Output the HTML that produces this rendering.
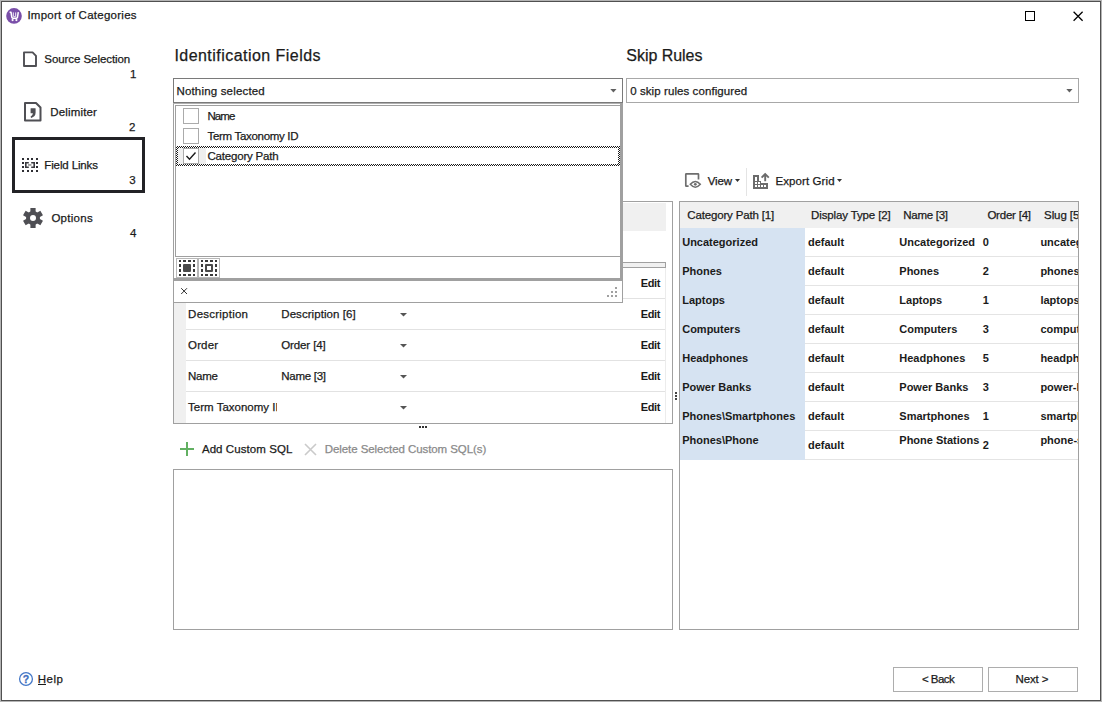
<!DOCTYPE html>
<html><head><meta charset="utf-8"><style>
html,body{margin:0;padding:0;width:1102px;height:702px;overflow:hidden;background:#fff}
body>div,body>span,body>svg{position:absolute;display:block}
span{white-space:pre;font-family:"Liberation Sans",sans-serif}
.r{-webkit-text-stroke:0.25px currentColor}
</style></head><body>
<div style="left:0px;top:0px;width:1102px;height:702px;background:#b4b4b4"></div>
<div style="left:1px;top:1px;width:1100px;height:700px;background:#505050"></div>
<div style="left:2px;top:2px;width:1098px;height:698px;background:#ffffff"></div>
<svg style="left:6px;top:8px" width="17" height="17" viewBox="0 0 17 17"><circle cx="8" cy="7.9" r="7.8" fill="#7a4fa9"/><path d="M3.6 4.2 L5 4.2 L5.9 9.6 Q6.1 10.2 6.7 10.2 L10.6 10.2 Q11.2 10.2 11.4 9.6 L12.3 4.2" fill="none" stroke="#fff" stroke-width="1.5" stroke-linejoin="round"/><path d="M7.3 4.4 L7.3 8.2 Q7.3 8.7 7.8 8.7 L9.2 8.7 Q9.7 8.7 9.7 8.2 L9.7 4.4" fill="none" stroke="#fff" stroke-width="0.9"/><circle cx="6.6" cy="12.1" r="1.1" fill="#fff"/><circle cx="10.4" cy="12.1" r="1.1" fill="#fff"/></svg>
<span class="r" style="left:27.40px;top:10.00px;font-size:11.5px;line-height:11.5px;color:#1b1b1b;letter-spacing:0.263px;">Import of Categories</span>
<svg style="left:1020px;top:6px" width="70" height="20" viewBox="0 0 70 20"><rect x="5.5" y="5.5" width="9" height="9" fill="none" stroke="#000" stroke-width="1"/><path d="M53.6 5.8 L62.6 14.8 M62.6 5.8 L53.6 14.8" stroke="#000" stroke-width="1.25"/></svg>
<svg style="left:22px;top:50px" width="18" height="19" viewBox="0 0 18 19"><path d="M2 2.4 L10.6 2.4 L14 5.8 L14 16 L2 16 Z" fill="none" stroke="#4f4f54" stroke-width="1.9" stroke-linejoin="round"/></svg>
<span class="r" style="left:44.30px;top:54.00px;font-size:11.5px;line-height:11.5px;color:#1b1b1b;letter-spacing:-0.067px;">Source Selection</span>
<span class="r" style="left:130.00px;top:69.00px;font-size:11.5px;line-height:11.5px;color:#1b1b1b;">1</span>
<svg style="left:23px;top:101px" width="20" height="22" viewBox="0 0 20 22"><path d="M2 2 L13 2 L17.5 6.5 L17.5 19.5 L2 19.5 Z" fill="none" stroke="#4f4f54" stroke-width="2" stroke-linejoin="round"/><path d="M7.6 7.6 Q7.6 7.3 7.9 7.3 H12.3 Q12.6 7.3 12.6 7.6 V11.6 Q12.6 15.8 8.2 17 L7.5 15.7 Q9.7 14.8 9.9 12.3 H7.9 Q7.6 12.3 7.6 12 Z" fill="#4f4f54"/></svg>
<span class="r" style="left:50.30px;top:107.00px;font-size:11.5px;line-height:11.5px;color:#1b1b1b;letter-spacing:0.150px;">Delimiter</span>
<span class="r" style="left:129.00px;top:122.00px;font-size:11.5px;line-height:11.5px;color:#1b1b1b;">2</span>
<div style="left:12px;top:137px;width:133px;height:56px;box-shadow:inset 0 0 0 3px #222226"></div>
<svg style="left:22px;top:158px" width="17" height="15" viewBox="0 0 17 15" fill="#2e2e33"><rect x="0" y="0" width="2" height="2"/><rect x="5" y="0" width="2" height="2"/><rect x="9" y="0" width="2" height="2"/><rect x="14" y="0" width="2" height="2"/><rect x="0" y="4" width="2" height="2"/><rect x="14" y="4" width="2" height="2"/><rect x="0" y="8" width="2" height="2"/><rect x="14" y="8" width="2" height="2"/><rect x="0" y="12" width="2" height="2"/><rect x="5" y="12" width="2" height="2"/><rect x="9" y="12" width="2" height="2"/><rect x="14" y="12" width="2" height="2"/><path d="M6.8 4.8 L3.8 4.8 L3.8 9.2 L6.8 9.2 M9.2 4.8 L12.2 4.8 L12.2 9.2 L9.2 9.2" fill="none" stroke="#3a3a3f" stroke-width="1.6"/><rect x="6" y="6.2" width="3.5" height="1.5" fill="#8a8a8a"/></svg>
<span class="r" style="left:44.30px;top:160.00px;font-size:11.5px;line-height:11.5px;color:#1b1b1b;letter-spacing:-0.130px;">Field Links</span>
<span class="r" style="left:129.20px;top:175.00px;font-size:11.5px;line-height:11.5px;color:#1b1b1b;">3</span>
<svg style="left:23px;top:208px" width="20" height="20" viewBox="-10 -10 20 20"><g fill="#4f4f54"><circle r="7"/><rect x="-2.6" y="-10" width="5.2" height="5" transform="rotate(0)"/><rect x="-2.6" y="-10" width="5.2" height="5" transform="rotate(60)"/><rect x="-2.6" y="-10" width="5.2" height="5" transform="rotate(120)"/><rect x="-2.6" y="-10" width="5.2" height="5" transform="rotate(180)"/><rect x="-2.6" y="-10" width="5.2" height="5" transform="rotate(240)"/><rect x="-2.6" y="-10" width="5.2" height="5" transform="rotate(300)"/></g><circle r="3" fill="#fff"/></svg>
<span class="r" style="left:51.40px;top:213.00px;font-size:11.5px;line-height:11.5px;color:#1b1b1b;letter-spacing:0.283px;">Options</span>
<span class="r" style="left:129.90px;top:228.00px;font-size:11.5px;line-height:11.5px;color:#1b1b1b;">4</span>
<span class="r" style="left:174.40px;top:48.00px;font-size:16px;line-height:16px;color:#1b1b1b;letter-spacing:0.460px;">Identification Fields</span>
<span class="r" style="left:626.30px;top:48.00px;font-size:16px;line-height:16px;color:#1b1b1b;letter-spacing:-0.033px;">Skip Rules</span>
<div style="left:173px;top:78px;width:450px;height:25px;background:#fff;box-shadow:inset 0 0 0 1px #7a7a7a"></div>
<span class="r" style="left:176.40px;top:86.00px;font-size:11.5px;line-height:11.5px;color:#1b1b1b;letter-spacing:0.180px;">Nothing selected</span>
<svg style="left:610px;top:89px" width="8" height="5"><path d="M0.3 0 L6.5 0 L3.4 3.5 Z" fill="#606060"/></svg>
<div style="left:626px;top:78px;width:453px;height:25px;background:#fff;box-shadow:inset 0 0 0 1px #a8a8a8"></div>
<span class="r" style="left:630.20px;top:86.00px;font-size:11.5px;line-height:11.5px;color:#1b1b1b;letter-spacing:0.082px;">0 skip rules configured</span>
<svg style="left:1066px;top:89px" width="8" height="5"><path d="M0.3 0 L6.5 0 L3.4 3.5 Z" fill="#606060"/></svg>
<svg style="left:680px;top:166px" width="24" height="24" viewBox="0 0 24 24"><path d="M8.6 20.2 L6.3 20.2 Q5.8 20.2 5.8 19.7 L5.8 8.3 Q5.8 7.8 6.3 7.8 L18 7.8 Q18.5 7.8 18.5 8.3 L18.5 13.4" fill="none" stroke="#6e6e6e" stroke-width="1.7"/><path d="M10.3 18.3 Q15.3 12.6 20.3 18.3 Q15.3 24 10.3 18.3 Z" fill="#fff" stroke="#6e6e6e" stroke-width="1.5"/><circle cx="15.3" cy="18.3" r="1.4" fill="#6e6e6e"/></svg>
<span class="r" style="left:707.70px;top:176.00px;font-size:11.5px;line-height:11.5px;color:#1b1b1b;letter-spacing:-0.133px;">View</span>
<svg style="left:735px;top:179px" width="6" height="4"><path d="M0 0 L5 0 L2.5 3 Z" fill="#333"/></svg>
<div style="left:746px;top:168px;width:1px;height:28px;background:#e4e4e4"></div>
<svg style="left:750px;top:170px" width="22" height="22" viewBox="0 0 22 22"><path fill-rule="evenodd" fill="#6b6b6b" d="M3 5 H9 V11 H11 V13 H18 V19 H3 Z M5 7 V11 H7 V7 Z M5 12 V14 H7 V12 Z M8 12 V14 H10 V12 Z M5 15 V17 H7 V15 Z M8 15 V17 H10 V15 Z M11 15 V17 H13 V15 Z M14 15 V17 H16 V15 Z"/><path d="M11.6 7.6 L15.2 4 L18.8 7.6 M15.2 4.2 V11.3" fill="none" stroke="#6b6b6b" stroke-width="1.9"/></svg>
<span class="r" style="left:775.40px;top:176.00px;font-size:11.5px;line-height:11.5px;color:#1b1b1b;letter-spacing:0.100px;">Export Grid</span>
<svg style="left:837px;top:179px" width="6" height="4"><path d="M0 0 L5 0 L2.5 3 Z" fill="#333"/></svg>
<div style="left:173px;top:201px;width:500px;height:223px;background:#fff;box-shadow:inset 0 0 0 1px #a0a0a0"></div>
<div style="left:174px;top:203px;width:492px;height:28px;background:#f0f0f0"></div>
<div style="left:174px;top:262px;width:492px;height:6px;background:#f0f0f0"></div>
<div style="left:174px;top:262px;width:492px;height:1px;background:#a0a0a0"></div>
<div style="left:174px;top:267px;width:492px;height:1px;background:#a0a0a0"></div>
<div style="left:665px;top:262px;width:1px;height:6px;background:#a0a0a0"></div>
<div style="left:665px;top:268px;width:1px;height:155px;background:#ececec"></div>
<div style="left:174px;top:268px;width:12px;height:155px;background:#f0f0f0"></div>
<div style="left:186px;top:298px;width:479px;height:1px;background:#e2e2e2"></div>
<div style="left:186px;top:329px;width:479px;height:1px;background:#e2e2e2"></div>
<div style="left:186px;top:360px;width:479px;height:1px;background:#e2e2e2"></div>
<div style="left:186px;top:391px;width:479px;height:1px;background:#e2e2e2"></div>
<span style="left:640.70px;top:278.00px;font-size:11px;line-height:11px;color:#1b1b1b;font-weight:700;letter-spacing:-0.333px;">Edit</span>
<span class="r" style="left:188.10px;top:309.00px;font-size:11.5px;line-height:11.5px;color:#1b1b1b;letter-spacing:0.240px;">Description</span>
<span class="r" style="left:281.30px;top:309.00px;font-size:11.5px;line-height:11.5px;color:#1b1b1b;letter-spacing:0.057px;">Description [6]</span>
<svg style="left:400px;top:313px" width="8" height="5"><path d="M0 0 L7 0 L3.5 3.6 Z" fill="#555"/></svg>
<span style="left:640.70px;top:309.00px;font-size:11px;line-height:11px;color:#1b1b1b;font-weight:700;letter-spacing:-0.333px;">Edit</span>
<span class="r" style="left:188.10px;top:340.00px;font-size:11.5px;line-height:11.5px;color:#1b1b1b;letter-spacing:0.125px;">Order</span>
<span class="r" style="left:281.30px;top:340.00px;font-size:11.5px;line-height:11.5px;color:#1b1b1b;letter-spacing:-0.125px;">Order [4]</span>
<svg style="left:400px;top:344px" width="8" height="5"><path d="M0 0 L7 0 L3.5 3.6 Z" fill="#555"/></svg>
<span style="left:640.70px;top:340.00px;font-size:11px;line-height:11px;color:#1b1b1b;font-weight:700;letter-spacing:-0.333px;">Edit</span>
<span class="r" style="left:188.10px;top:371.00px;font-size:11.5px;line-height:11.5px;color:#1b1b1b;letter-spacing:-0.333px;">Name</span>
<span class="r" style="left:281.30px;top:371.00px;font-size:11.5px;line-height:11.5px;color:#1b1b1b;letter-spacing:-0.286px;">Name [3]</span>
<svg style="left:400px;top:375px" width="8" height="5"><path d="M0 0 L7 0 L3.5 3.6 Z" fill="#555"/></svg>
<span style="left:640.70px;top:371.00px;font-size:11px;line-height:11px;color:#1b1b1b;font-weight:700;letter-spacing:-0.333px;">Edit</span>
<span class="r" style="left:188.10px;top:402.00px;font-size:11.5px;line-height:11.5px;color:#1b1b1b;">Term Taxonomy I<span style='display:inline-block;width:2px;overflow:hidden;vertical-align:top'>D</span></span>
<svg style="left:400px;top:406px" width="8" height="5"><path d="M0 0 L7 0 L3.5 3.6 Z" fill="#555"/></svg>
<span style="left:640.70px;top:402.00px;font-size:11px;line-height:11px;color:#1b1b1b;font-weight:700;letter-spacing:-0.333px;">Edit</span>
<div style="left:675px;top:392px;width:2px;height:2px;background:#444"></div>
<div style="left:675px;top:395px;width:2px;height:2px;background:#444"></div>
<div style="left:675px;top:398px;width:2px;height:2px;background:#444"></div>
<div style="left:419px;top:426px;width:2px;height:2px;background:#333"></div>
<div style="left:422px;top:426px;width:2px;height:2px;background:#333"></div>
<div style="left:425px;top:426px;width:2px;height:2px;background:#333"></div>
<div style="left:173px;top:103px;width:450px;height:200px;background:#fff"></div>
<div style="left:173px;top:103px;width:1px;height:200px;background:#a0a0a0"></div>
<div style="left:622px;top:103px;width:1px;height:200px;background:#a0a0a0"></div>
<div style="left:173px;top:302px;width:450px;height:1px;background:#a0a0a0"></div>
<div style="left:173px;top:103px;width:450px;height:1px;background:#b0b0b0"></div>
<div style="left:175px;top:105px;width:446px;height:152px;background:#fff;box-shadow:inset 0 0 0 1px #a0a0a0"></div>
<div style="left:620px;top:103px;width:3px;height:178px;background:#a0a0a0"></div>
<div style="left:173px;top:278px;width:450px;height:3px;background:#a0a0a0"></div>
<div style="left:183px;top:108px;width:16px;height:16px;background:#fff;box-shadow:inset 0 0 0 1px #ababab"></div>
<span class="r" style="left:207.50px;top:111.00px;font-size:11.5px;line-height:11.5px;color:#1b1b1b;letter-spacing:-0.933px;">Name</span>
<div style="left:183px;top:128px;width:16px;height:16px;background:#fff;box-shadow:inset 0 0 0 1px #ababab"></div>
<span class="r" style="left:207.50px;top:131.00px;font-size:11.5px;line-height:11.5px;color:#1b1b1b;letter-spacing:-0.307px;">Term Taxonomy ID</span>
<div style="left:183px;top:148px;width:16px;height:16px;background:#fff;box-shadow:inset 0 0 0 1px #ababab"></div>
<span class="r" style="left:207.50px;top:151.00px;font-size:11.5px;line-height:11.5px;color:#1b1b1b;letter-spacing:-0.200px;">Category Path</span>
<svg style="left:183px;top:148px" width="16" height="16"><path d="M3.5 8 L6.5 11.2 L12.5 4.5" fill="none" stroke="#1a1a1a" stroke-width="1.4"/></svg>
<div style="left:199px;top:148px;width:7px;height:16px;background:#eeeeee"></div>
<div style="left:178px;top:148px;width:5px;height:16px;background:#f0f0f0"></div>
<div style="left:176px;top:146px;width:444px;height:2px;background:repeating-conic-gradient(#1a1a1a 0 25%,#fff 0 50%) 0 0/2px 2px"></div>
<div style="left:176px;top:164px;width:444px;height:2px;background:repeating-conic-gradient(#1a1a1a 0 25%,#fff 0 50%) 0 0/2px 2px"></div>
<div style="left:176px;top:146px;width:2px;height:20px;background:repeating-conic-gradient(#1a1a1a 0 25%,#fff 0 50%) 0 0/2px 2px"></div>
<div style="left:618px;top:146px;width:2px;height:20px;background:repeating-conic-gradient(#1a1a1a 0 25%,#fff 0 50%) 0 0/2px 2px"></div>
<div style="left:176px;top:258px;width:44px;height:20px;background:#b8b8b8"></div>
<div style="left:177px;top:259px;width:20px;height:18px;background:#fff"></div>
<div style="left:199px;top:259px;width:20px;height:18px;background:#fff"></div>
<div style="left:179px;top:260px;width:2px;height:2px;background:#3a3a3a"></div>
<div style="left:183px;top:260px;width:3px;height:2px;background:#3a3a3a"></div>
<div style="left:188px;top:260px;width:3px;height:2px;background:#3a3a3a"></div>
<div style="left:193px;top:260px;width:2px;height:2px;background:#3a3a3a"></div>
<div style="left:179px;top:274px;width:2px;height:2px;background:#3a3a3a"></div>
<div style="left:183px;top:274px;width:3px;height:2px;background:#3a3a3a"></div>
<div style="left:188px;top:274px;width:3px;height:2px;background:#3a3a3a"></div>
<div style="left:193px;top:274px;width:2px;height:2px;background:#3a3a3a"></div>
<div style="left:179px;top:264px;width:2px;height:3px;background:#3a3a3a"></div>
<div style="left:179px;top:269px;width:2px;height:3px;background:#3a3a3a"></div>
<div style="left:193px;top:264px;width:2px;height:3px;background:#3a3a3a"></div>
<div style="left:193px;top:269px;width:2px;height:3px;background:#3a3a3a"></div>
<div style="left:201px;top:260px;width:2px;height:2px;background:#3a3a3a"></div>
<div style="left:205px;top:260px;width:3px;height:2px;background:#3a3a3a"></div>
<div style="left:210px;top:260px;width:3px;height:2px;background:#3a3a3a"></div>
<div style="left:215px;top:260px;width:2px;height:2px;background:#3a3a3a"></div>
<div style="left:201px;top:274px;width:2px;height:2px;background:#3a3a3a"></div>
<div style="left:205px;top:274px;width:3px;height:2px;background:#3a3a3a"></div>
<div style="left:210px;top:274px;width:3px;height:2px;background:#3a3a3a"></div>
<div style="left:215px;top:274px;width:2px;height:2px;background:#3a3a3a"></div>
<div style="left:201px;top:264px;width:2px;height:3px;background:#3a3a3a"></div>
<div style="left:201px;top:269px;width:2px;height:3px;background:#3a3a3a"></div>
<div style="left:215px;top:264px;width:2px;height:3px;background:#3a3a3a"></div>
<div style="left:215px;top:269px;width:2px;height:3px;background:#3a3a3a"></div>
<div style="left:183px;top:264px;width:8px;height:8px;background:#4a4a4a;border-radius:1px"></div>
<div style="left:205px;top:264px;width:8px;height:8px;box-shadow:inset 0 0 0 2px #4a4a4a;border-radius:1px"></div>
<svg style="left:180px;top:287px" width="9" height="9"><path d="M1.2 1.2 L7 7 M7 1.2 L1.2 7" stroke="#333" stroke-width="1"/></svg>
<div style="left:615px;top:287px;width:2px;height:2px;background:#a0a0a0"></div>
<div style="left:611px;top:291px;width:2px;height:2px;background:#a0a0a0"></div>
<div style="left:615px;top:291px;width:2px;height:2px;background:#a0a0a0"></div>
<div style="left:607px;top:295px;width:2px;height:2px;background:#a0a0a0"></div>
<div style="left:611px;top:295px;width:2px;height:2px;background:#a0a0a0"></div>
<div style="left:615px;top:295px;width:2px;height:2px;background:#a0a0a0"></div>
<svg style="left:179px;top:441px" width="16" height="16"><path d="M8 1 L8 15 M1 8 L15 8" stroke="#62b062" stroke-width="2"/></svg>
<span class="r" style="left:201.90px;top:444.00px;font-size:11.5px;line-height:11.5px;color:#1b1b1b;letter-spacing:0.077px;">Add Custom SQL</span>
<svg style="left:303px;top:442px" width="15" height="15"><path d="M2 2 L13 13 M13 2 L2 13" stroke="#cacaca" stroke-width="1.6"/></svg>
<span class="r" style="left:324.70px;top:444.00px;font-size:11.5px;line-height:11.5px;color:#8a8a8a;letter-spacing:-0.071px;">Delete Selected Custom SQL(s)</span>
<div style="left:173px;top:469px;width:500px;height:161px;background:#fff;box-shadow:inset 0 0 0 1px #a0a0a0"></div>
<div style="left:679px;top:201px;width:400px;height:429px;background:#fff;box-shadow:inset 0 0 0 1px #a0a0a0"></div>
<div style="left:680px;top:202px;width:398px;height:26px;background:#f0f0f0"></div>
<div style="left:680px;top:228px;width:125px;height:232px;background:#d6e3f2"></div>
<div style="left:805px;top:256px;width:273px;height:1px;background:#e4e4e4"></div>
<div style="left:805px;top:285px;width:273px;height:1px;background:#e4e4e4"></div>
<div style="left:805px;top:314px;width:273px;height:1px;background:#e4e4e4"></div>
<div style="left:805px;top:343px;width:273px;height:1px;background:#e4e4e4"></div>
<div style="left:805px;top:372px;width:273px;height:1px;background:#e4e4e4"></div>
<div style="left:805px;top:401px;width:273px;height:1px;background:#e4e4e4"></div>
<div style="left:805px;top:430px;width:273px;height:1px;background:#e4e4e4"></div>
<div style="left:805px;top:459px;width:273px;height:1px;background:#e4e4e4"></div>
<span class="r" style="left:687.30px;top:210.00px;font-size:11.5px;line-height:11.5px;color:#1b1b1b;letter-spacing:-0.156px;">Category Path [1]</span>
<span class="r" style="left:811.10px;top:210.00px;font-size:11.5px;line-height:11.5px;color:#1b1b1b;letter-spacing:-0.133px;">Display Type [2]</span>
<span class="r" style="left:903.30px;top:210.00px;font-size:11.5px;line-height:11.5px;color:#1b1b1b;letter-spacing:-0.286px;">Name [3]</span>
<span class="r" style="left:987.40px;top:210.00px;font-size:11.5px;line-height:11.5px;color:#1b1b1b;letter-spacing:-0.213px;">Order [4]</span>
<span style="left:682.20px;top:237.00px;font-size:11px;line-height:11px;color:#1b1b1b;font-weight:700;">Uncategorized</span>
<span style="left:808.00px;top:237.00px;font-size:11px;line-height:11px;color:#1b1b1b;font-weight:700;">default</span>
<span style="left:899.30px;top:237.00px;font-size:11px;line-height:11px;color:#1b1b1b;font-weight:700;">Uncategorized</span>
<span style="left:982.70px;top:237.00px;font-size:11px;line-height:11px;color:#1b1b1b;font-weight:700;">0</span>
<span style="left:1040.40px;top:237.00px;font-size:11px;line-height:11px;color:#1b1b1b;font-weight:700;width:37.6px;overflow:hidden;height:15px;">uncategorized</span>
<span style="left:682.20px;top:266.00px;font-size:11px;line-height:11px;color:#1b1b1b;font-weight:700;">Phones</span>
<span style="left:808.00px;top:266.00px;font-size:11px;line-height:11px;color:#1b1b1b;font-weight:700;">default</span>
<span style="left:899.30px;top:266.00px;font-size:11px;line-height:11px;color:#1b1b1b;font-weight:700;">Phones</span>
<span style="left:982.70px;top:266.00px;font-size:11px;line-height:11px;color:#1b1b1b;font-weight:700;">2</span>
<span style="left:1040.40px;top:266.00px;font-size:11px;line-height:11px;color:#1b1b1b;font-weight:700;width:37.6px;overflow:hidden;height:15px;">phones</span>
<span style="left:682.20px;top:295.00px;font-size:11px;line-height:11px;color:#1b1b1b;font-weight:700;">Laptops</span>
<span style="left:808.00px;top:295.00px;font-size:11px;line-height:11px;color:#1b1b1b;font-weight:700;">default</span>
<span style="left:899.30px;top:295.00px;font-size:11px;line-height:11px;color:#1b1b1b;font-weight:700;">Laptops</span>
<span style="left:982.70px;top:295.00px;font-size:11px;line-height:11px;color:#1b1b1b;font-weight:700;">1</span>
<span style="left:1040.40px;top:295.00px;font-size:11px;line-height:11px;color:#1b1b1b;font-weight:700;width:37.6px;overflow:hidden;height:15px;">laptops</span>
<span style="left:682.20px;top:324.00px;font-size:11px;line-height:11px;color:#1b1b1b;font-weight:700;">Computers</span>
<span style="left:808.00px;top:324.00px;font-size:11px;line-height:11px;color:#1b1b1b;font-weight:700;">default</span>
<span style="left:899.30px;top:324.00px;font-size:11px;line-height:11px;color:#1b1b1b;font-weight:700;">Computers</span>
<span style="left:982.70px;top:324.00px;font-size:11px;line-height:11px;color:#1b1b1b;font-weight:700;">3</span>
<span style="left:1040.40px;top:324.00px;font-size:11px;line-height:11px;color:#1b1b1b;font-weight:700;width:37.6px;overflow:hidden;height:15px;">computers</span>
<span style="left:682.20px;top:353.00px;font-size:11px;line-height:11px;color:#1b1b1b;font-weight:700;">Headphones</span>
<span style="left:808.00px;top:353.00px;font-size:11px;line-height:11px;color:#1b1b1b;font-weight:700;">default</span>
<span style="left:899.30px;top:353.00px;font-size:11px;line-height:11px;color:#1b1b1b;font-weight:700;">Headphones</span>
<span style="left:982.70px;top:353.00px;font-size:11px;line-height:11px;color:#1b1b1b;font-weight:700;">5</span>
<span style="left:1040.40px;top:353.00px;font-size:11px;line-height:11px;color:#1b1b1b;font-weight:700;width:37.6px;overflow:hidden;height:15px;">headphones</span>
<span style="left:682.20px;top:382.00px;font-size:11px;line-height:11px;color:#1b1b1b;font-weight:700;">Power Banks</span>
<span style="left:808.00px;top:382.00px;font-size:11px;line-height:11px;color:#1b1b1b;font-weight:700;">default</span>
<span style="left:899.30px;top:382.00px;font-size:11px;line-height:11px;color:#1b1b1b;font-weight:700;">Power Banks</span>
<span style="left:982.70px;top:382.00px;font-size:11px;line-height:11px;color:#1b1b1b;font-weight:700;">3</span>
<span style="left:1040.40px;top:382.00px;font-size:11px;line-height:11px;color:#1b1b1b;font-weight:700;width:37.6px;overflow:hidden;height:15px;">power-banks</span>
<span style="left:682.20px;top:411.00px;font-size:11px;line-height:11px;color:#1b1b1b;font-weight:700;">Phones\Smartphones</span>
<span style="left:808.00px;top:411.00px;font-size:11px;line-height:11px;color:#1b1b1b;font-weight:700;">default</span>
<span style="left:899.30px;top:411.00px;font-size:11px;line-height:11px;color:#1b1b1b;font-weight:700;">Smartphones</span>
<span style="left:982.70px;top:411.00px;font-size:11px;line-height:11px;color:#1b1b1b;font-weight:700;">1</span>
<span style="left:1040.40px;top:411.00px;font-size:11px;line-height:11px;color:#1b1b1b;font-weight:700;width:37.6px;overflow:hidden;height:15px;">smartphones</span>
<span style="left:682.20px;top:435.00px;font-size:11px;line-height:11px;color:#1b1b1b;font-weight:700;">Phones\Phone</span>
<span style="left:808.00px;top:440.00px;font-size:11px;line-height:11px;color:#1b1b1b;font-weight:700;">default</span>
<span style="left:899.30px;top:435.00px;font-size:11px;line-height:11px;color:#1b1b1b;font-weight:700;">Phone Stations</span>
<span style="left:982.70px;top:440.00px;font-size:11px;line-height:11px;color:#1b1b1b;font-weight:700;">2</span>
<span style="left:1040.40px;top:435.00px;font-size:11px;line-height:11px;color:#1b1b1b;font-weight:700;width:37.6px;overflow:hidden;height:15px;">phone-stations</span>
<span class="r" style="left:1044.10px;top:210.00px;font-size:11.5px;line-height:11.5px;color:#1b1b1b;letter-spacing:-0.100px;width:33.9px;overflow:hidden;height:15.5px;">Slug [5]</span>
<div style="left:1079px;top:195px;width:21px;height:446px;background:#fff"></div>
<div style="left:1078px;top:201px;width:1px;height:429px;background:#a0a0a0"></div>
<svg style="left:18px;top:671px" width="16" height="16"><circle cx="8" cy="8" r="6.4" fill="none" stroke="#4478c8" stroke-width="1.3"/><text x="8" y="11.8" font-family="Liberation Sans" font-size="10.5" font-weight="700" fill="#3f70c0" stroke="#3f70c0" stroke-width="0.3" text-anchor="middle">?</text></svg>
<span class="r" style="left:37.70px;top:674.00px;font-size:11.5px;line-height:11.5px;color:#1b1b1b;letter-spacing:0.500px;">Help</span>
<div style="left:38px;top:684px;width:8px;height:1px;background:#1b1b1b"></div>
<div style="left:893px;top:667px;width:90px;height:25px;background:#fff;box-shadow:inset 0 0 0 1px #adadad"></div>
<div style="left:988px;top:667px;width:90px;height:25px;background:#fff;box-shadow:inset 0 0 0 1px #adadad"></div>
<span class="r" style="left:922.10px;top:674.00px;font-size:11.5px;line-height:11.5px;color:#1b1b1b;letter-spacing:-0.580px;">&lt; Back</span>
<span class="r" style="left:1015.50px;top:674.00px;font-size:11.5px;line-height:11.5px;color:#1b1b1b;letter-spacing:-0.120px;">Next &gt;</span>
</body></html>
